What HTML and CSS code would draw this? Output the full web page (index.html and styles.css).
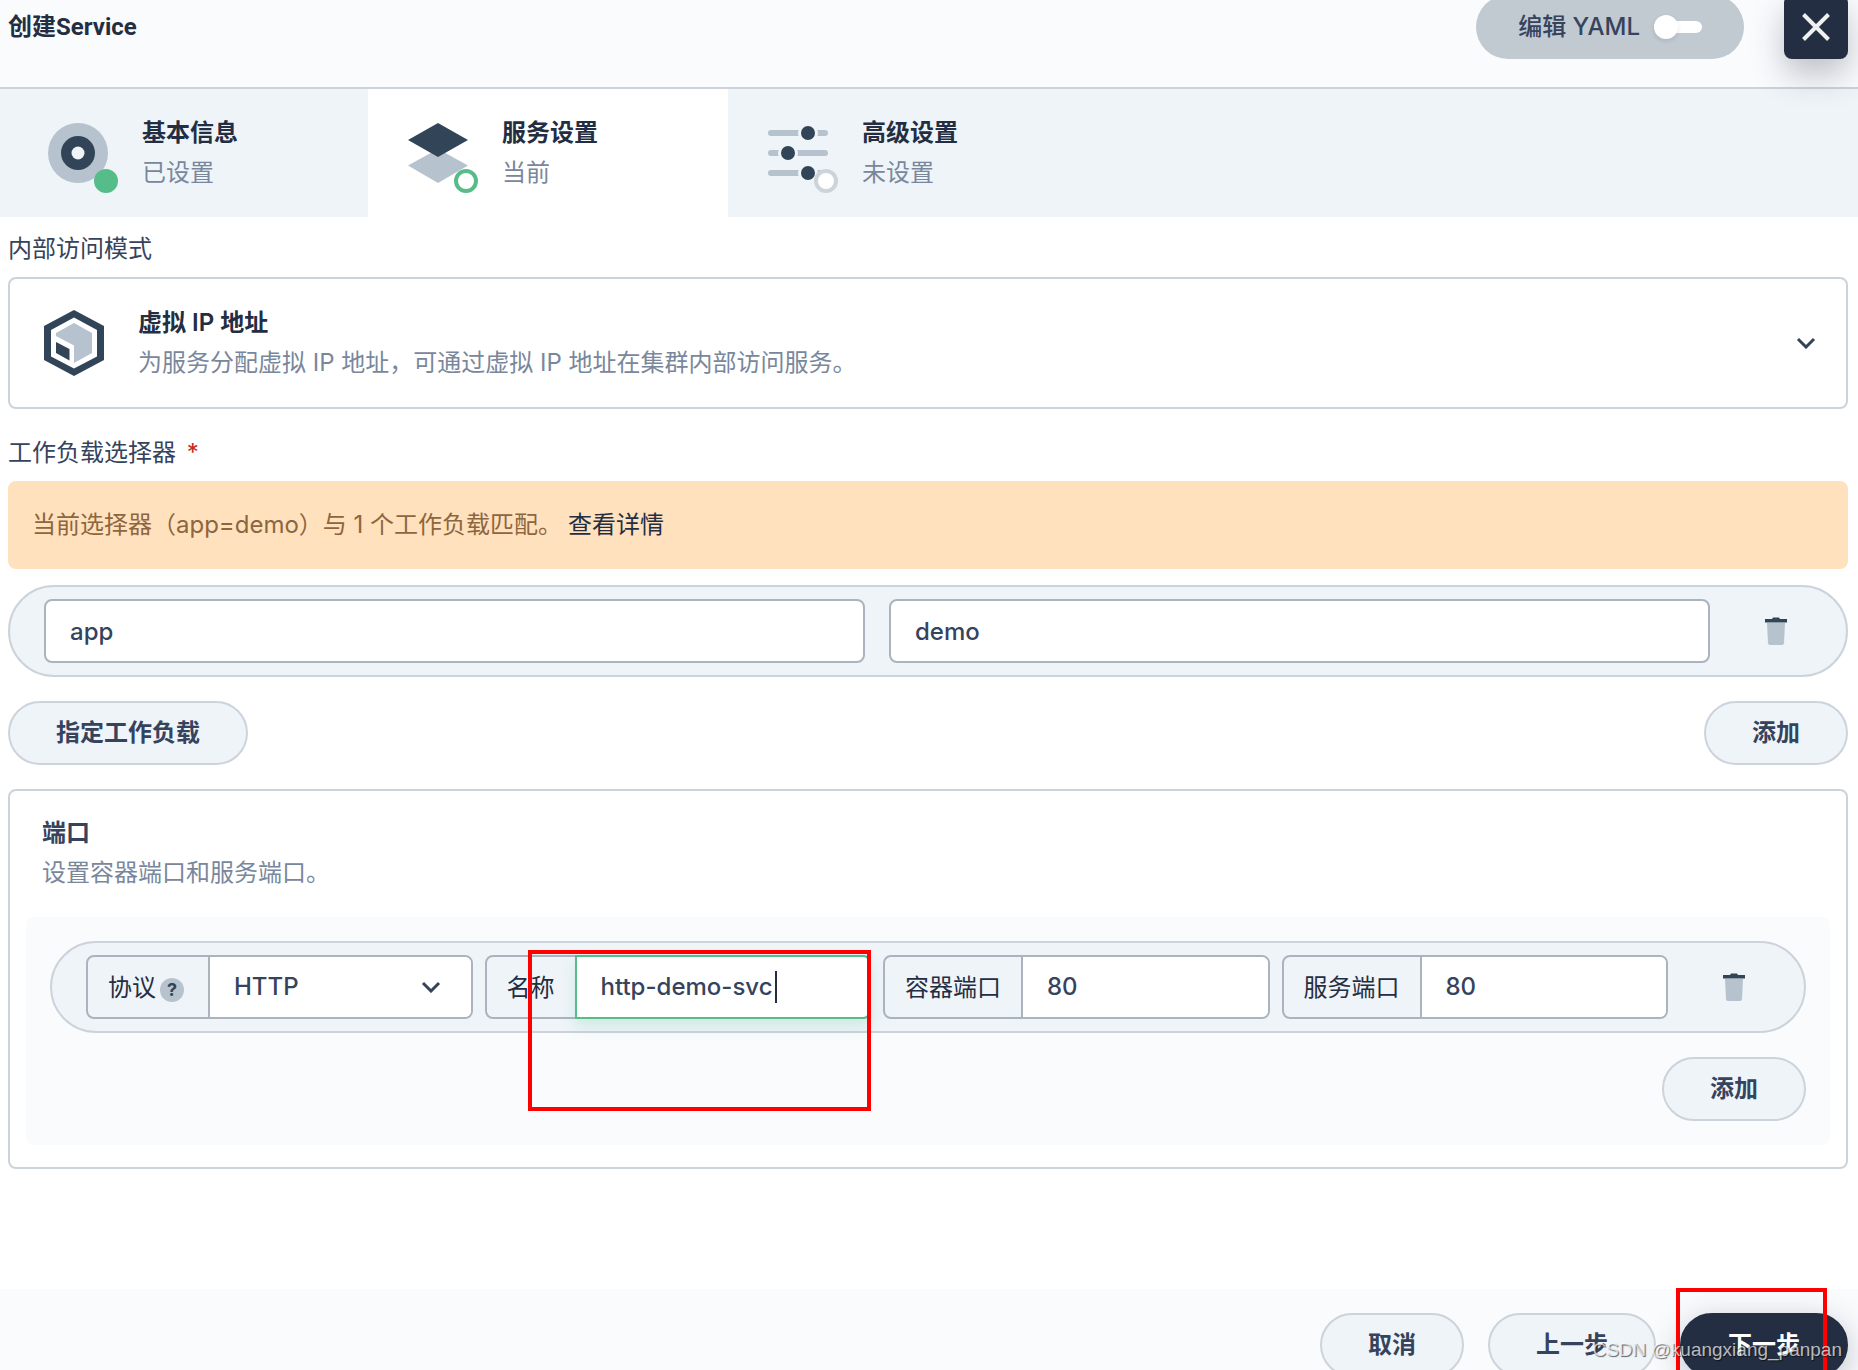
FILE: index.html
```html
<!DOCTYPE html>
<html lang="zh-CN">
<head>
<meta charset="utf-8">
<title>创建Service</title>
<link rel="stylesheet" href="styles.css">
</head>
<body>
<svg class="sprite" aria-hidden="true">
  <symbol id="trash" viewBox="0 0 24 28">
    <path d="M3 6h18l-1 20q-.2 2-2 2H6q-1.800 0-2-2z" fill="#b6c2cd"/>
    <path d="M1 2h7l1-1.500h6l1 1.500h7v3.500H1z" fill="#324558"/>
  </symbol>
  <symbol id="chevron" viewBox="0 0 20 12">
    <path d="M2 2l8 8 8-8" fill="none" stroke="#324558" stroke-width="3"/>
  </symbol>
</svg>
<header class="header">
  <h1 class="title">创建Service</h1>
  <button class="yaml" type="button">编辑 YAML<span class="switch"></span></button>
  <button class="close" type="button" aria-label="关闭">
    <svg width="28" height="28" viewBox="0 0 28 28"><path d="M1.500 1.500l25 25M26.500 1.500l-25 25" stroke="#eff1f0" stroke-width="4"/></svg>
  </button>
</header>

<nav class="steps">
  <div class="step">
    <span class="step-icon">
      <svg width="60" height="60" viewBox="0 0 60 60"><circle cx="30" cy="30" r="30" fill="#b6c2cd"/><circle cx="30" cy="30" r="17" fill="#324558"/><circle cx="30" cy="30" r="6.500" fill="#eff4f9"/></svg>
      <i class="dot done"></i>
    </span>
    <div><div class="heading">基本信息</div><div class="note">已设置</div></div>
  </div>
  <div class="step active">
    <span class="step-icon">
      <svg width="60" height="60" viewBox="0 0 60 60"><path d="M30 26l30 16.500L30 60 0 42.500z" fill="#b6c2cd"/><path d="M30 0l30 17-30 17L0 17z" fill="#324558"/></svg>
      <i class="dot current"></i>
    </span>
    <div><div class="heading">服务设置</div><div class="note">当前</div></div>
  </div>
  <div class="step">
    <span class="step-icon">
      <svg width="60" height="60" viewBox="0 0 60 60"><path d="M3 10h54M3 30h54M3 50h54" stroke="#b6c2cd" stroke-width="6" stroke-linecap="round"/><g fill="#324558" stroke="#eff4f9" stroke-width="3"><circle cx="40" cy="10" r="8.500"/><circle cx="20" cy="30" r="8.500"/><circle cx="40" cy="50" r="8.500"/></g></svg>
      <i class="dot"></i>
    </span>
    <div><div class="heading">高级设置</div><div class="note">未设置</div></div>
  </div>
</nav>

<main class="content">
  <div class="label">内部访问模式</div>
  <button class="mode" type="button">
    <svg width="60" height="66" viewBox="0 0 60 66"><path d="M30 0l30 16v34L30 66 0 50V16z" fill="#324558"/><path d="M30 7.500l23 12.500v26.500L30 58.500 7 46.500V20z" fill="#fff"/><path d="M30 13l18 10v20L30 53V35.500L12 26v-3z" fill="#b6c2cd"/><path d="M12 32l13.500 7v11.500L12 43z" fill="#324558"/></svg>
    <span class="mode-text"><span class="heading">虚拟 IP 地址</span><span class="note">为服务分配虚拟 IP 地址，可通过虚拟 IP 地址在集群内部访问服务。</span></span>
    <svg width="20" height="12"><use href="#chevron"/></svg>
  </button>

  <div class="label selector-label">工作负载选择器 <span class="required">*</span></div>
  <div class="alert">当前选择器（app=demo）与 1 个工作负载匹配。<a href="#details">查看详情</a></div>

  <div class="pill pair">
    <input class="field" aria-label="键" value="app">
    <input class="field" aria-label="值" value="demo">
    <button class="delete" type="button" aria-label="删除"><svg width="24" height="28"><use href="#trash"/></svg></button>
  </div>
  <div class="actions">
    <button class="button" type="button">指定工作负载</button>
    <button class="button" type="button">添加</button>
  </div>

  <section class="ports">
    <h2 class="heading ports-title">端口</h2>
    <p class="note ports-note">设置容器端口和服务端口。</p>
    <div class="panel">
      <div class="pill">
        <div class="group">
          <label for="protocol">协议<span class="help">?</span></label>
          <select id="protocol"><option>HTTP</option></select>
          <svg class="select-arrow" width="20" height="12"><use href="#chevron"/></svg>
        </div>
        <div class="group">
          <label for="name">名称</label>
          <input id="name" class="focused" value="http-demo-svc">
          <i class="caret"></i>
          <i class="mark mark-name"></i>
        </div>
        <div class="group">
          <label for="container-port">容器端口</label>
          <input id="container-port" value="80">
        </div>
        <div class="group">
          <label for="service-port">服务端口</label>
          <input id="service-port" value="80">
        </div>
        <button class="delete" type="button" aria-label="删除"><svg width="24" height="28"><use href="#trash"/></svg></button>
      </div>
      <div class="actions end">
        <button class="button" type="button">添加</button>
      </div>
    </div>
  </section>
</main>

<footer class="footer">
  <button class="button" type="button">取消</button>
  <button class="button" type="button">上一步</button>
  <div class="next"><button class="button primary" type="button">下一步</button><i class="mark mark-next"></i></div>
</footer>
<div class="watermark">CSDN @kuangxiang_panpan</div>
</body>
</html>
```
FILE: styles.css
```css
* { box-sizing: border-box; }
body {
  margin: 0;
  height: 100vh;
  overflow: hidden;
  position: relative;
  background: #fff;
  color: #36435c;
  font: 400 24px/40px Inter, "Noto Sans CJK SC", sans-serif;
}
button, input, select { font: inherit; color: inherit; margin: 0; }
button { cursor: pointer; }
svg { display: block; flex: none; }
.sprite { position: absolute; width: 0; height: 0; }

.header {
  display: flex;
  align-items: center;
  gap: 40px;
  margin-top: -5px;
  padding: 0 10px 28px 8px;
  background: #fafbfd;
  border-bottom: 2px solid #ccd3db;
}
.title {
  flex: 1;
  margin: 0;
  color: #242e42;
  font: 700 24px/40px Roboto, "Noto Sans CJK SC", sans-serif;
}
.yaml {
  display: flex;
  align-items: center;
  gap: 14px;
  height: 64px;
  padding: 0 42px;
  border: 0;
  border-radius: 32px;
  background: #c1c9d1;
  font-weight: 500;
}
.switch {
  display: flex;
  align-items: center;
  width: 48px;
  height: 12px;
  border-radius: 6px;
  background: #fff;
}
.switch::before {
  content: "";
  width: 24px;
  height: 24px;
  border-radius: 50%;
  background: #fff;
  box-shadow: 0 2px 4px rgba(36, 46, 66, .12);
}
.close {
  display: grid;
  place-items: center;
  width: 64px;
  height: 64px;
  padding: 0;
  border: 0;
  border-radius: 8px;
  background: #242e42;
  box-shadow: 0 16px 32px rgba(36, 46, 66, .28);
}

.steps { display: flex; padding-left: 8px; background: #eff4f9; }
.step {
  display: flex;
  align-items: center;
  gap: 34px;
  width: 360px;
  padding: 24px 40px;
}
.step.active { background: #fff; }
.step-icon { position: relative; }
.dot {
  position: absolute;
  right: -10px;
  bottom: -10px;
  width: 24px;
  height: 24px;
  border: 4px solid #ccd3db;
  border-radius: 50%;
  background: #fff;
}
.dot.current { border-color: #55bc8a; }
.dot.done { border-color: #55bc8a; background: #55bc8a; }
.heading { color: #242e42; font-size: 24px; font-weight: 600; }
.note { color: #79879c; }

.content { padding: 12px 10px 0 8px; }
.label { margin-bottom: 8px; }
.selector-label { margin: 24px 0 8px; }
.required { margin-left: 4px; color: #ca2621; }
.mode {
  display: flex;
  align-items: center;
  gap: 34px;
  width: 100%;
  padding: 24px 30px 24px 34px;
  border: 2px solid #ccd3db;
  border-radius: 8px;
  background: #fff;
  text-align: left;
}
.mode-text { display: grid; flex: 1; }
.alert {
  padding: 24px;
  border-radius: 8px;
  background: #ffe1be;
  color: #8d663e;
}
.alert a { margin-left: 6px; color: #242e42; text-decoration: none; }

.pill {
  display: flex;
  align-items: center;
  gap: 12px;
  padding: 12px 4px 12px 34px;
  border: 2px solid #ccd3db;
  border-radius: 46px;
  background: #eff4f9;
}
.pair { gap: 24px; margin-top: 16px; }
.field, .group {
  flex: 1;
  min-width: 0;
  height: 64px;
  border: 2px solid #abb4be;
  border-radius: 8px;
}
.field { padding: 0 24px; background: #fff; font-weight: 500; outline: 0; }
.delete {
  display: grid;
  place-items: center;
  width: 132px;
  height: 64px;
  margin-left: -12px;
  padding: 0;
  border: 0;
  background: none;
}
.pair .delete { margin-left: -24px; }
.actions { display: flex; justify-content: space-between; margin-top: 24px; }
.actions.end { justify-content: flex-end; }
.button {
  height: 64px;
  padding: 0 46px;
  border: 2px solid #ccd3db;
  border-radius: 32px;
  background: #eff4f9;
  font-weight: 600;
}

.ports {
  margin-top: 24px;
  padding: 22px 16px;
  border: 2px solid #ccd3db;
  border-radius: 8px;
}
.ports-title { margin: 0 16px; color: #36435c; }
.ports-note { margin: 0 16px 24px; }
.panel { padding: 24px; border-radius: 8px; background: #fafbfd; }
.group { display: flex; position: relative; }
.group label {
  display: flex;
  align-items: center;
  padding: 2px 20px 0;
  color: #242e42;
  white-space: nowrap;
}
.help {
  width: 24px;
  height: 24px;
  margin: 4px 4px 0;
  border-radius: 50%;
  background: #b6c2cd;
  color: #324558;
  font-size: 18px;
  font-weight: 700;
  line-height: 24px;
  text-align: center;
}
.group input, .group select {
  flex: 1;
  width: 0;
  min-width: 0;
  padding: 0 24px;
  border: 0;
  border-left: 2px solid #abb4be;
  border-radius: 0 6px 6px 0;
  background: #fff;
  font-weight: 500;
  outline: 0;
  appearance: none;
}
.select-arrow {
  position: absolute;
  top: 24px;
  right: 30px;
  pointer-events: none;
}
.group .focused {
  margin: -2px -2px -2px 0;
  border: 2px solid #55bc8a;
  border-radius: 0 8px 8px 0;
  box-shadow: 0 8px 16px rgba(85, 188, 138, .2);
}
.caret {
  position: absolute;
  top: 14px;
  left: 288px;
  width: 2px;
  height: 32px;
  background: #242e42;
}
.mark { position: absolute; border: 4px solid #f00; pointer-events: none; }
.mark-name { top: -7px; left: 41px; width: 343px; height: 161px; }
.mark-next { top: -25px; left: -4px; width: 151px; height: 120px; }

.footer {
  display: flex;
  justify-content: flex-end;
  gap: 24px;
  margin-top: 120px;
  padding: 24px 10px 24px 8px;
  background: #fafbfd;
}
.next { position: relative; }
.primary {
  border-color: #242e42;
  background: #242e42;
  color: #fff;
  box-shadow: 0 8px 32px rgba(36, 46, 66, .28);
}
.watermark {
  position: absolute;
  right: 16px;
  bottom: 0;
  color: rgba(255, 255, 255, .7);
  font: 400 19px/40px "Liberation Sans", sans-serif;
  text-shadow: 1px 1px 1px rgba(0, 0, 0, .6);
}
```
